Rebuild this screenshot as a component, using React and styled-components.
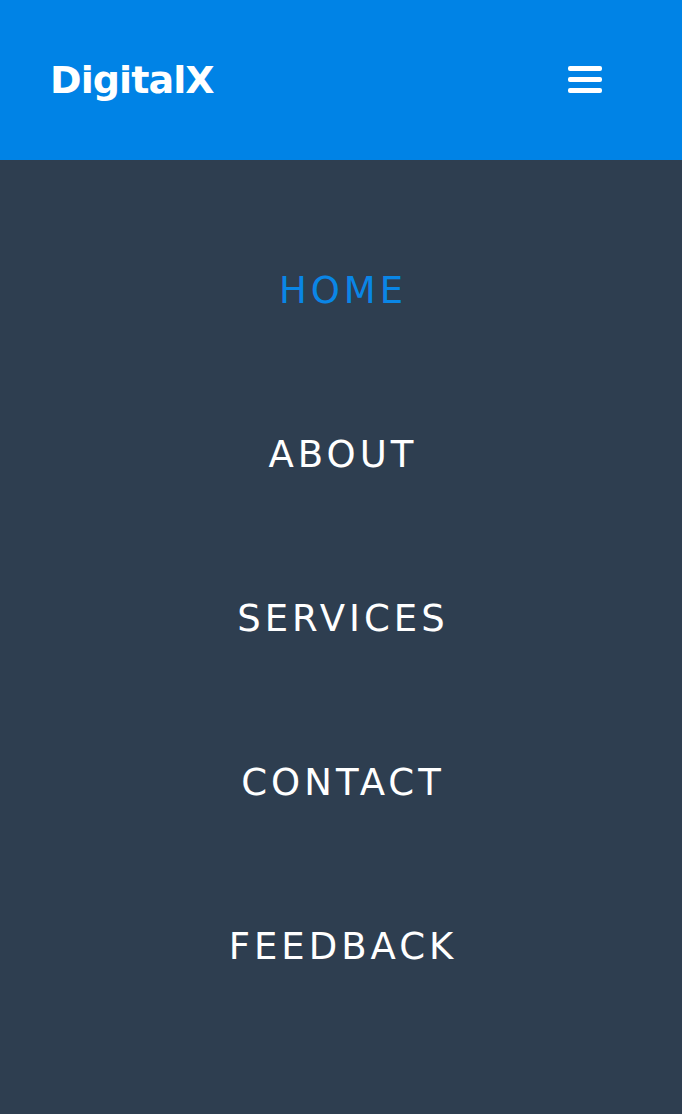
import React from "react";
import styled, { createGlobalStyle } from "styled-components";

const GlobalStyle = createGlobalStyle`
  html, body {
    margin: 0;
    padding: 0;
    background-color: #2e3e50;
  }
  * {
    box-sizing: border-box;
  }
`;

const Page = styled.div`
  min-height: 1114px;
  background-color: #2e3e50;
  font-family: "DejaVu Sans", "Open Sans", sans-serif;
`;

const Header = styled.header`
  display: flex;
  justify-content: space-between;
  align-items: center;
  height: 160px;
  padding: 0 80px 0 50px;
  background-color: #0083e6;
`;

const Logo = styled.div`
  color: #fff;
  font-size: 38px;
  font-weight: 700;
  letter-spacing: -0.9px;
`;

const MenuButton = styled.button`
  display: flex;
  padding: 0;
  border: none;
  background: transparent;
  cursor: pointer;
`;

const Nav = styled.nav`
  display: flex;
  flex-direction: column;
  padding-top: 48px;
`;

const NavItem = styled.a`
  display: flex;
  justify-content: center;
  align-items: center;
  height: 164px;
  padding-left: 4px;
  color: ${(props) => (props.active ? "#0a86e6" : "#fff")};
  font-size: 37px;
  font-weight: 400;
  letter-spacing: 4px;
  text-decoration: none;
  text-transform: uppercase;
`;

const links = ["Home", "About", "Services", "Contact", "Feedback"];

const BarsIcon = () => (
  <svg width="34" height="28" viewBox="0 0 34 28">
    <rect x="0" y="0" width="34" height="5" rx="2" fill="#fff" />
    <rect x="0" y="11" width="34" height="5" rx="2" fill="#fff" />
    <rect x="0" y="22" width="34" height="5" rx="2" fill="#fff" />
  </svg>
);

const App = () => {
  return (
    <Page>
      <GlobalStyle />
      <Header>
        <Logo>DigitalX</Logo>
        <MenuButton aria-label="Menu">
          <BarsIcon />
        </MenuButton>
      </Header>
      <Nav>
        {links.map((link, i) => (
          <NavItem key={link} href="#" active={i === 0}>
            {link}
          </NavItem>
        ))}
      </Nav>
    </Page>
  );
};

export default App;
